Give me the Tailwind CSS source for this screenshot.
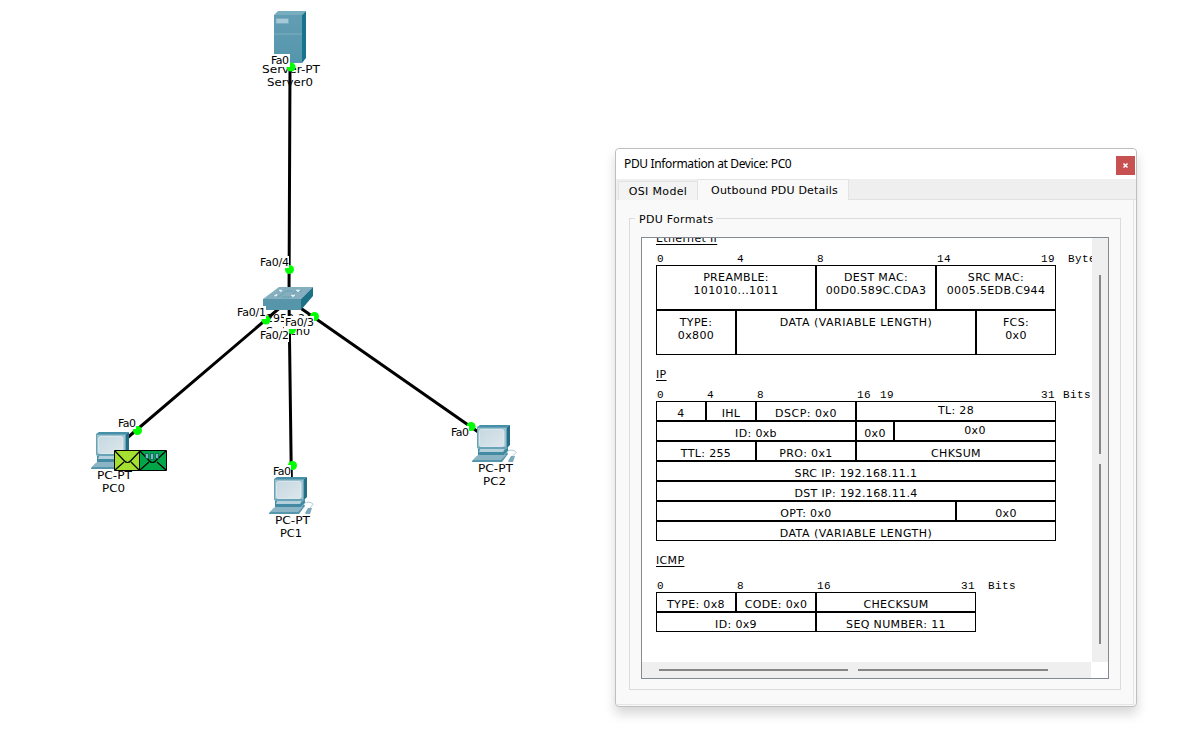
<!DOCTYPE html>
<html lang="en">
<head>
<meta charset="utf-8">
<title>PDU Information</title>
<script src="https://cdn.jsdelivr.net/npm/@tailwindcss/browser@4"></script>
</head>
<body class="bg-white text-black">
<main class="relative h-[732px] w-[1179px] overflow-hidden font-['DejaVu_Sans',sans-serif] text-[11px] leading-[13px]">

<svg class="absolute left-0 top-0" width="600" height="732" viewBox="0 0 600 732" fill="none">
  <defs>
    <linearGradient id="front" x1="0" y1="0" x2="0" y2="1"><stop stop-color="#629db3"/><stop offset="1" stop-color="#5596ad"/></linearGradient>
    <linearGradient id="scr" x1="0" y1="0" x2="1" y2="1"><stop stop-color="#c6d8e1"/><stop offset="1" stop-color="#dce7eb"/></linearGradient>
    <g id="pc">
      <path d="M508 451c4-2 7 0 8 1s-2 2-3 4" stroke="#a9c9d5" stroke-width="1"/>
      <path d="M508 461l3-5h4l-2 6h-4z" fill="#78aabb"/>
      <path d="M478 449h28l2-2v4l-4 4h-26z" fill="#438ba2"/>
      <path d="M480 449h25l-2 3h-24z" fill="#b4d0da"/>
      <path d="M472 461l5-5h26l4-4 1 2-6 8h-30z" fill="#5696ac"/>
      <path d="M473 460l5-5h28l-5 5z" fill="#8bb5c5"/>
      <path d="M477 427l3-2h30l-3 2z" fill="#4590a8"/>
      <path d="M507 427l3-2v20l-4 4z" fill="#236f88"/>
      <path d="M477 427h30v20q0 2-2 2h-26q-2 0-2-2z" fill="#69a3b7"/>
      <path d="M478 428h28v19h-28z" fill="#9cc1ce"/>
      <rect x="479.500" y="429.500" width="24.500" height="17" rx="2" fill="url(#scr)" stroke="#e8f1f4" stroke-width=".7"/>
    </g>
  </defs>

  <!-- server -->
  <path d="M274 15l4-4h28l-4 4z" fill="#78adbf"/>
  <path d="M302 15l4-4v47l-4 5z" fill="#16758c"/>
  <path d="M274 15h28v48h-28z" fill="url(#front)"/>
  <path d="M274 34h28" stroke="#80b1c2"/>
  <path d="M276 18.500h12.500v5H276z" fill="#a5c9d6" stroke="#76a9bc" stroke-width=".6"/>

  <!-- device names -->
  <g fill="#000">
    <text x="262" y="73" textLength="58" lengthAdjust="spacingAndGlyphs">Server-PT</text>
    <text x="267" y="86" textLength="46" lengthAdjust="spacingAndGlyphs">Server0</text>
    <text x="266" y="322" textLength="46" lengthAdjust="spacingAndGlyphs">2950-24</text>
    <text x="266" y="335" textLength="44" lengthAdjust="spacingAndGlyphs">Switch0</text>
    <text x="97" y="479" textLength="35" lengthAdjust="spacingAndGlyphs">PC-PT</text>
    <text x="102" y="492" textLength="23" lengthAdjust="spacingAndGlyphs">PC0</text>
    <text x="275" y="524" textLength="35" lengthAdjust="spacingAndGlyphs">PC-PT</text>
    <text x="280" y="537" textLength="22" lengthAdjust="spacingAndGlyphs">PC1</text>
    <text x="478" y="472" textLength="35" lengthAdjust="spacingAndGlyphs">PC-PT</text>
    <text x="483" y="485" textLength="23" lengthAdjust="spacingAndGlyphs">PC2</text>
  </g>

  <g stroke="#000" stroke-width="3">
    <path d="M290 66L289 300M289 300L113 450M289 300L291.500 490M289 300L494 443"/>
  </g>

  <!-- switch -->
  <path d="M263 299l16-12h34l-12 12z" fill="#85afbe"/>
  <path d="M263 299h38v11h-38z" fill="#5795ab"/>
  <path d="M301 299l12-12v9l-12 14z" fill="#1c7187"/>
  <path d="M273 296h7l6-5h7M282 297h8l6-6h6" stroke="#67a0b4" stroke-width="1"/>
  <path d="M279 290l3 0-1 2zM296 290h4l-2 2zM274 296h3v-2zM291 295h4l-2 2z" fill="#e5f0f3" stroke="#e5f0f3" stroke-width=".6"/>

  <g fill="#00ff00">
    <circle cx="291" cy="67" r="4.500"/><circle cx="289.500" cy="269.500" r="4.500"/>
    <circle cx="266" cy="320" r="4.500"/><circle cx="314.500" cy="316.500" r="4.500"/><circle cx="291.500" cy="329.500" r="4.500"/>
    <circle cx="137.500" cy="430.500" r="4.500"/><circle cx="292.500" cy="465.500" r="4.500"/><circle cx="471" cy="426.500" r="4.500"/>
  </g>

  <use href="#pc"/>
  <use href="#pc" x="-203" y="52"/>
  <use href="#pc" x="-381" y="7"/>

  <!-- port labels -->
  <g fill="#fff">
    <path d="M270 54h20v13h-20zM259 256h30v12h-30zM236 306h30v13h-30zM259 329h30v13h-30zM284 316h30v13h-30zM117 417h19v12h-19zM272 465h19v12h-19zM450 426h19v12h-19z"/>
  </g>
  <g fill="#000">
    <text x="271" y="64" textLength="18">Fa0</text>
    <text x="260" y="266" textLength="29">Fa0/4</text>
    <text x="237" y="316" textLength="29">Fa0/1</text>
    <text x="260" y="339" textLength="29">Fa0/2</text>
    <text x="285" y="326" textLength="29">Fa0/3</text>
    <text x="118" y="427" textLength="18">Fa0</text>
    <text x="273" y="475" textLength="18">Fa0</text>
    <text x="451" y="436" textLength="18">Fa0</text>
  </g>

  <!-- envelopes -->
  <path d="M114.500 450.500h25v20h-25z" fill="#a5df2f" stroke="#000"/>
  <path d="M139.500 450.500h27v20h-27z" fill="#00a647" stroke="#000"/>
  <path d="M115 451l9 9.500q3.500 4 7 0l9-9.500M115 470l9-8M139 470l-8-8M140 451l9 9.500q3.500 4 7 0l10-9.500M140 470l9-8M166 470l-9-8" stroke="#000" stroke-width="1.200"/>
  <path d="M145.500 453.500h3v5h-3zM150.500 453.500h3v6h-3zM155.500 453.500h3v5h-3z" fill="#73bbc5" stroke="#0b5250" stroke-width=".7"/>
</svg>

<section class="absolute left-[615px] top-[148px] flex h-[559px] w-[522px] flex-col rounded border border-[#bfbfbf] bg-[#f9f9f9] shadow-[0_7px_12px_rgba(0,0,0,0.16)]">
  <header class="flex h-[30px] shrink-0 items-center justify-between rounded-t bg-white pl-2 pr-px">
    <h1 class="-mt-px font-['Noto_Sans',sans-serif] text-[12px] leading-4 tracking-[-0.36px]">PDU Information at Device: PC0</h1>
    <button class="mt-[3px] flex h-[19px] w-[19px] items-center justify-center bg-[#c75050]">
      <svg width="7" height="7" viewBox="0 0 7 7"><path d="M1.500 1.500l4 4M5.500 1.500l-4 4" stroke="#fff" stroke-width="1.600"/></svg>
    </button>
  </header>
  <nav class="flex h-[21px] shrink-0 items-end bg-[#efefef] pl-[2px]">
    <div class="flex h-[19px] w-[80px] items-center justify-center border border-b-0 border-[#e3e3e3] bg-[#f3f3f3]"><span class="tracking-[0.35px]">OSI Model</span></div>
    <div class="flex h-[21px] w-[151px] items-center justify-center border border-b-0 border-l-0 border-[#e3e3e3] bg-[#f9f9f9] pl-[3px]"><span class="tracking-[0.2px]">Outbound PDU Details</span></div>
    <div class="h-px flex-1 self-end bg-[#e1e1e1]"></div>
  </nav>
  <div class="mr-[2px] mb-px flex min-h-0 flex-1 flex-col border-r border-b border-[#e5e5e5] pl-[13px] pr-[13px] pt-[12px] pb-[14px]">
    <fieldset class="flex min-h-0 flex-1 flex-col">
      <legend class="relative top-px ml-[7px] h-[13px] px-[3px] tracking-[0.3px]">PDU Formats</legend>
      <div class="-mt-[7px] flex min-h-0 flex-1 border border-[#dcdcdc] px-[11px] pt-[18px] pb-[10px] [clip-path:polygon(0_0,6px_0,6px_4px,87px_4px,87px_0,100%_0,100%_100%,0_100%)]">
        <div class="grid h-[442px] w-[468px] shrink-0 grid-cols-[450px_16px] grid-rows-[424px_16px] border border-[#848a92] bg-white">
          <div class="overflow-hidden pl-[14px] tracking-[0.35px]">
            <h2 class="-mt-[6px] h-[13px] underline underline-offset-2">Ethernet II</h2>
            <div class="mt-[8px] flex h-[12px] items-center whitespace-nowrap pl-px font-['Liberation_Mono',monospace] text-[11px] leading-[12px] tracking-[0.4px] *:shrink-0"><span class="w-[80px]">0</span><span class="w-[80px]">4</span><span class="w-[120px]">8</span><span class="w-[104px]">14</span><span class="w-[27px]">19</span><span>Bytes</span></div>
            <div class="flex h-[45px] w-[400px] text-center *:border *:border-black *:pt-[5px]"><div class="w-[160px]">PREAMBLE:<br>101010...1011</div><div class="w-[120px]">DEST MAC:<br>00D0.589C.CDA3</div><div class="w-[120px]">SRC MAC:<br>0005.5EDB.C944</div></div>
            <div class="flex h-[45px] w-[400px] text-center *:border *:border-black *:pt-[5px]"><div class="w-[80px]">TYPE:<br>0x800</div><div class="w-[240px] tracking-[0.5px]">DATA (VARIABLE LENGTH)</div><div class="w-[80px]">FCS:<br>0x0</div></div>

            <h2 class="mt-[13px] h-[13px] underline underline-offset-2">IP</h2>
            <div class="mt-[8px] flex h-[12px] items-center whitespace-nowrap pl-px font-['Liberation_Mono',monospace] text-[11px] leading-[12px] tracking-[0.4px] *:shrink-0"><span class="w-[50px]">0</span><span class="w-[50px]">4</span><span class="w-[100px]">8</span><span class="w-[23px]">16</span><span class="w-[161px]">19</span><span class="w-[22px]">31</span><span>Bits</span></div>
            <div class="w-[400px] text-center *:flex *:h-[20px] *:*:border *:*:border-black *:*:pt-[5px]">
              <div><div class="w-[50px]">4</div><div class="w-[50px]">IHL</div><div class="w-[100px] tracking-[0.5px]">DSCP: 0x0</div><div class="w-[200px]"><span class="block -mt-[3px]">TL: 28</span></div></div>
              <div><div class="w-[200px]">ID: 0xb</div><div class="w-[38px]">0x0</div><div class="w-[162px]"><span class="block -mt-[3px]">0x0</span></div></div>
              <div><div class="w-[100px]">TTL: 255</div><div class="w-[100px]">PRO: 0x1</div><div class="w-[200px]">CHKSUM</div></div>
              <div><div class="w-[400px]">SRC IP: 192.168.11.1</div></div>
              <div><div class="w-[400px]">DST IP: 192.168.11.4</div></div>
              <div><div class="w-[300px]">OPT: 0x0</div><div class="w-[100px]">0x0</div></div>
              <div><div class="w-[400px] tracking-[0.5px]">DATA (VARIABLE LENGTH)</div></div>
            </div>

            <h2 class="mt-[13px] h-[13px] underline underline-offset-2">ICMP</h2>
            <div class="mt-[13px] flex h-[12px] items-center whitespace-nowrap pl-px font-['Liberation_Mono',monospace] text-[11px] leading-[12px] tracking-[0.4px] *:shrink-0"><span class="w-[80px]">0</span><span class="w-[80px]">8</span><span class="w-[144px]">16</span><span class="w-[27px]">31</span><span>Bits</span></div>
            <div class="w-[320px] text-center *:flex *:h-[20px] *:*:border *:*:border-black *:*:pt-[5px]">
              <div><div class="w-[80px]">TYPE: 0x8</div><div class="w-[80px]">CODE: 0x0</div><div class="w-[160px]">CHECKSUM</div></div>
              <div><div class="w-[160px]">ID: 0x9</div><div class="w-[160px]">SEQ NUMBER: 11</div></div>
            </div>
          </div>
          <div class="flex flex-col items-center gap-[10px] bg-[#efefef] pt-[37px]"><div class="h-[179px] w-[2px] bg-[#868686]"></div><div class="h-[180px] w-[2px] bg-[#868686]"></div></div>
          <div class="mr-px flex items-center gap-[10px] bg-[#efefef] pl-[17px]"><div class="h-[2px] w-[189px] bg-[#868686]"></div><div class="h-[2px] w-[190px] bg-[#868686]"></div></div>
        </div>
      </div>
    </fieldset>
  </div>
</section>
</main>
</body>
</html>
